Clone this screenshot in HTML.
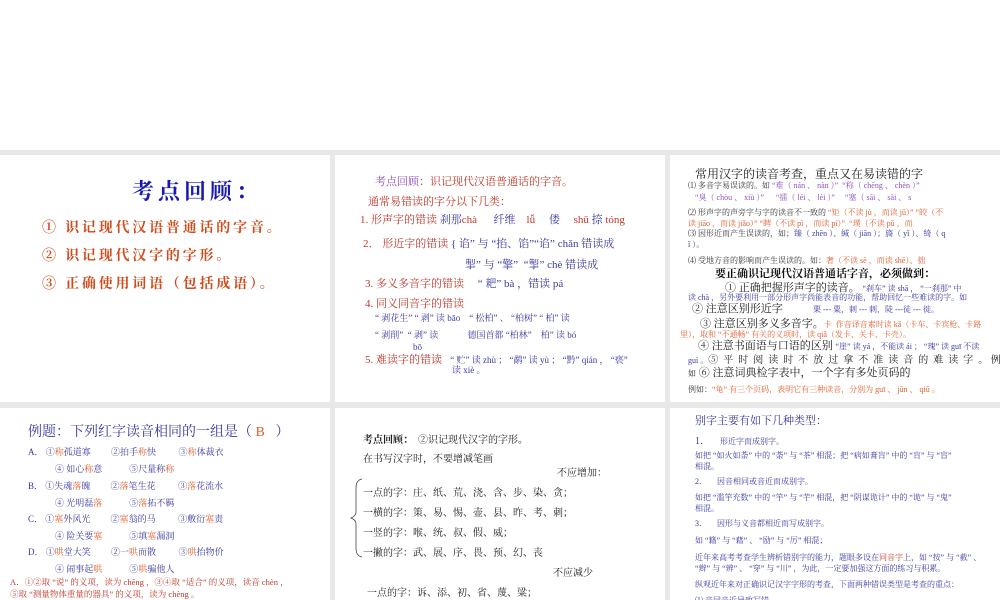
<!DOCTYPE html>
<html><head><meta charset="utf-8"><style>
*{margin:0;padding:0;box-sizing:border-box}
body{width:1000px;height:600px;overflow:hidden;background:#fff;position:relative;font-family:"Liberation Serif","Noto Serif CJK SC",serif}
.gray{position:absolute;left:0;top:150px;width:1000px;height:450px;background:#e8e8e8}
.s{position:absolute;background:#fff;overflow:hidden}
.t{position:absolute;white-space:nowrap}
.r{color:#c0392b}.b{color:#3a3aa0}.o{color:#e06030}.p{color:#9050c0}
</style></head><body>
<div class="gray"></div>

<div class="s" style="left:0;top:155px;width:330px;height:247px">
<div class="t" style="left:132px;top:20px;font-size:22px;color:#1a1ab0;font-weight:bold;letter-spacing:4px">考点回顾：</div>
<div class="t" style="left:42px;top:62px;font-size:14px;color:#d04a1a;font-weight:bold;letter-spacing:2.8px">① 识记现代汉语普通话的字音。</div>
<div class="t" style="left:42px;top:90px;font-size:14px;color:#d04a1a;font-weight:bold;letter-spacing:2.8px">② 识记现代汉字的字形。</div>
<div class="t" style="left:42px;top:118px;font-size:14px;color:#d04a1a;font-weight:bold;letter-spacing:2.8px">③ 正确使用词语（包括成语）。</div>
</div>

<div class="s" style="left:335px;top:155px;width:330px;height:247px;font-size:11px">
<div class="t p" style="left:40px;top:18px">考点回顾<span class="r">：识记现代汉语普通话的字音。</span></div>
<div class="t r" style="left:33px;top:38px">通常易错读的字分以下几类：</div>
<div class="t r" style="left:25px;top:56px">1. 形声字的错读 <span class="b">刹那</span>chà &nbsp;&nbsp;&nbsp;&nbsp;&nbsp;<span class="b">纤维</span> &nbsp;&nbsp;&nbsp;lǚ &nbsp;&nbsp;&nbsp;&nbsp;<span class="b">偻</span> &nbsp;&nbsp;&nbsp;&nbsp;shū <span class="b">捺</span> tóng</div>
<div class="t" style="left:28px;top:80px"><span class="r">2． 形近字的错读</span> <span class="b">{ 谄” 与 “掐、馅”“谄” chǎn 错读成</span></div>
<div class="t b" style="left:130px;top:101px">掣” 与 “擎” &nbsp;“掣” chè 错读成</div>
<div class="t r" style="left:30px;top:120px">3. 多义多音字的错读 &nbsp;&nbsp;&nbsp;&nbsp;<span class="b">“ 耙” bà ，错读 pá</span></div>
<div class="t r" style="left:30px;top:140px">4. 同义同音字的错读</div>
<div class="t b" style="left:40px;top:156px;font-size:9px">“ 剥花生” “ 剥” 读 bāo &nbsp;&nbsp;&nbsp;“ 松柏” 、 “柏树” “ 柏” 读</div>
<div class="t b" style="left:40px;top:173px;font-size:9px">“ 剥削” &nbsp;“ 剥” 读 &nbsp;&nbsp;&nbsp;&nbsp;&nbsp;&nbsp;&nbsp;&nbsp;&nbsp;&nbsp;&nbsp;&nbsp;德国首都 “柏林” &nbsp;&nbsp;&nbsp;柏” 读 bó</div>
<div class="t b" style="left:78px;top:187px;font-size:9px">bō</div>
<div class="t r" style="left:30px;top:196px">5. 难读字的错读 &nbsp;&nbsp;<span class="b" style="font-size:9px">“ 贮” 读 zhù ； “鹬” 读 yù ； “黔” qián ， “亵”</span></div>
<div class="t b" style="left:117px;top:208px;font-size:9px">读 xiè 。</div>
</div>

<div class="s" style="left:670px;top:155px;width:330px;height:247px;font-size:8px">
<div class="t" style="left:25px;top:10px;font-size:12px;color:#222">常用汉字的读音考查，重点又在易读错的字</div>
<div class="t" style="left:18px;top:25px;color:#333">⑴ 多音字易误读的。如 <span class="p">“难（ nán 、 nàn ）” &nbsp;“称（ chēng 、 chèn ）”</span></div>
<div class="t p" style="left:25px;top:37px">“臭（ chòu 、 xiù ）” &nbsp;&nbsp;&nbsp;&nbsp;&nbsp;“擂（ léi 、 lèi ）” &nbsp;&nbsp;&nbsp;&nbsp;“塞（ sāi 、 sài 、 s</div>
<div class="t" style="left:18px;top:52px;color:#333">⑵ 形声字的声旁字与字的读音不一致的 <span class="o">“矩（不读 jù ，而读 jǔ）” “皎（不</span></div>
<div class="t o" style="left:18px;top:63px">读 jiāo ，而读 jiǎo）” “睥（不读 pì ，而读 pí）” &nbsp;“璞（不读 pǔ ，而</div>
<div class="t" style="left:18px;top:73px;color:#333">⑶ 因形近而产生误读的，如；<span class="b">臻（ zhēn ）、缄（ jiān ）；旖（ yǐ ）、绮（ q</span></div>
<div class="t b" style="left:18px;top:84px">ǐ ）。</div>
<div class="t" style="left:18px;top:100px;color:#333">⑷ 受地方音的影响而产生误读的。如：<span class="o">奢（不读 sē ，而读 shē）、拙</span></div>
<div class="t" style="left:45px;top:110px;font-size:11px;font-weight:bold;color:#111">要正确识记现代汉语普通话字音，必须做到：</div>
<div class="t" style="left:55px;top:124px;font-size:11px;color:#222">① 正确把握形声字的读音。 <span class="b" style="font-size:8px">“刹车” 读 shā ， “一刹那” 中</span></div>
<div class="t b" style="left:18px;top:137px">读 chà ，另外要利用一部分形声字尚能表音的功能，帮助回忆一些难读的字。如</div>
<div class="t" style="left:22px;top:145px;font-size:11px;color:#222">② 注意区别形近字 &nbsp;&nbsp;&nbsp;&nbsp;&nbsp;&nbsp;&nbsp;&nbsp;&nbsp;&nbsp;<span class="b" style="font-size:8px">栗 --- 粟，刺 --- 刺，陡 ---徒 --- 徙。</span></div>
<div class="t" style="left:30px;top:160px;font-size:11px;color:#222">③ 注意区别多义多音字。<span class="o" style="font-size:8px">卡 &nbsp;作音译音素时读 kǎ（卡车、卡宾枪、卡路</span></div>
<div class="t o" style="left:10px;top:174px">里），取和 “不通畅” 有关的义项时，读 qiǎ（发卡、关卡、卡壳）。</div>
<div class="t" style="left:28px;top:182px;font-size:11px;color:#222">④ 注意书面语与口语的区别 <span class="b" style="font-size:8px">“崖” 读 yá ，不能读 ái ； “瑰” 读 guī 不读</span></div>
<div class="t" style="left:18px;top:196px;font-size:10px;color:#222"><span class="b" style="font-size:8px">guì 。</span>⑤ &nbsp;平 &nbsp;时 &nbsp;阅 &nbsp;读 &nbsp;时 &nbsp;不 &nbsp;放 &nbsp;过 &nbsp;拿 &nbsp;不 &nbsp;准 &nbsp;读 &nbsp;音 &nbsp;的 &nbsp;难 &nbsp;读 &nbsp;字 &nbsp;。 例</div>
<div class="t" style="left:18px;top:209px;font-size:11px;color:#222"><span style="font-size:8px">如</span> ⑥ 注意词典检字表中，一个字有多处页码的</div>
<div class="t" style="left:18px;top:229px;color:#333">例如：<span class="o">“龟” 有三个页码，表明它有三种读音，分别为 guī 、 jūn 、 qiū 。</span></div>
</div>

<div class="s" style="left:0;top:408px;width:330px;height:192px;font-size:9px">
<div class="t b" style="left:28px;top:13px;font-size:14px">例题：下列红字读音相同的一组是（ <span class="o">B</span> &nbsp;&nbsp;）</div>
<div class="t b" style="left:28px;top:37px">A． ①<span class="o">称</span>孤道寡 &nbsp;&nbsp;&nbsp;&nbsp;&nbsp;&nbsp;&nbsp;&nbsp;②拍手<span class="o">称</span>快 &nbsp;&nbsp;&nbsp;&nbsp;&nbsp;&nbsp;&nbsp;&nbsp;&nbsp;③<span class="o">称</span>体裁衣</div>
<div class="t b" style="left:55px;top:54px">④ 如心<span class="o">称</span>意 &nbsp;&nbsp;&nbsp;&nbsp;&nbsp;&nbsp;&nbsp;&nbsp;&nbsp;&nbsp;&nbsp;⑤尺量称<span class="o">称</span></div>
<div class="t b" style="left:28px;top:71px">B． ①失魂<span class="o">落</span>魄 &nbsp;&nbsp;&nbsp;&nbsp;&nbsp;&nbsp;&nbsp;&nbsp;②<span class="o">落</span>笔生花 &nbsp;&nbsp;&nbsp;&nbsp;&nbsp;&nbsp;&nbsp;&nbsp;&nbsp;③<span class="o">落</span>花流水</div>
<div class="t b" style="left:55px;top:88px">④ 光明磊<span class="o">落</span> &nbsp;&nbsp;&nbsp;&nbsp;&nbsp;&nbsp;&nbsp;&nbsp;&nbsp;&nbsp;&nbsp;⑤<span class="o">落</span>拓不羁</div>
<div class="t b" style="left:28px;top:104px">C． ①<span class="o">塞</span>外风光 &nbsp;&nbsp;&nbsp;&nbsp;&nbsp;&nbsp;&nbsp;&nbsp;②<span class="o">塞</span>翁的马 &nbsp;&nbsp;&nbsp;&nbsp;&nbsp;&nbsp;&nbsp;&nbsp;&nbsp;③敷衍<span class="o">塞</span>责</div>
<div class="t b" style="left:55px;top:121px">④ 险关要<span class="o">塞</span> &nbsp;&nbsp;&nbsp;&nbsp;&nbsp;&nbsp;&nbsp;&nbsp;&nbsp;&nbsp;&nbsp;⑤填<span class="o">塞</span>漏洞</div>
<div class="t b" style="left:28px;top:137px">D． ①<span class="o">哄</span>堂大笑 &nbsp;&nbsp;&nbsp;&nbsp;&nbsp;&nbsp;&nbsp;&nbsp;②一<span class="o">哄</span>而散 &nbsp;&nbsp;&nbsp;&nbsp;&nbsp;&nbsp;&nbsp;&nbsp;&nbsp;③<span class="o">哄</span>抬物价</div>
<div class="t b" style="left:55px;top:154px">④ 闹事起<span class="o">哄</span> &nbsp;&nbsp;&nbsp;&nbsp;&nbsp;&nbsp;&nbsp;&nbsp;&nbsp;&nbsp;&nbsp;⑤<span class="o">哄</span>骗他人</div>
<div class="t r" style="left:10px;top:168px;font-size:8.5px">A．①②取 “说” 的义项，读为 chēng ，③④取 “适合” 的义项，读音 chèn ，</div>
<div class="t r" style="left:10px;top:180px;font-size:8.5px">⑤取 “测量物体重量的器具” 的义项，读为 chèng 。</div>
</div>

<div class="s" style="left:335px;top:408px;width:330px;height:192px;font-size:10px;color:#222">
<div class="t" style="left:28px;top:23px"><b>考点回顾：</b> &nbsp;②识记现代汉字的字形。</div>
<div class="t" style="left:28px;top:42px">在书写汉字时，不要增减笔画</div>
<div class="t" style="left:222px;top:56px">不应增加：</div>
<div class="t" style="left:28px;top:76px">一点的字：庄、纸、荒、浇、含、步、染、贪；</div>
<div class="t" style="left:28px;top:96px">一横的字：策、易、惕、壶、县、昨、考、刺；</div>
<div class="t" style="left:28px;top:116px">一竖的字：喉、统、叔、假、威；</div>
<div class="t" style="left:28px;top:136px">一撇的字：武、展、序、畏、预、幻、丧</div>
<div class="t" style="left:218px;top:156px">不应减少</div>
<div class="t" style="left:32px;top:176px">一点的字：诉、添、初、省、蔑、粱；</div>
<svg style="position:absolute;left:15px;top:70px" width="15" height="80"><path d="M12 1 Q6 2 6 10 L6 34 Q6 38 1 40 Q6 42 6 46 L6 70 Q6 78 12 79" fill="none" stroke="#444" stroke-width="0.8"/></svg>
</div>

<div class="s" style="left:670px;top:408px;width:330px;height:192px;font-size:8px;color:#3a3aa0">
<div class="t" style="left:25px;top:4px;font-size:11px">别字主要有如下几种类型：</div>
<div class="t" style="left:25px;top:24px"><span style="font-size:10px">1．</span> &nbsp;&nbsp;&nbsp;&nbsp;形近字而成别字。</div>
<div class="t" style="left:25px;top:42px">如把 “如火如荼” 中的 “荼” 与 “茶” 相混；把 “病如膏肓” 中的 “肓” 与 “盲”</div>
<div class="t" style="left:25px;top:53px">相混。</div>
<div class="t" style="left:25px;top:68px">2． &nbsp;&nbsp;&nbsp;&nbsp;因音相同或音近而成别字。</div>
<div class="t" style="left:25px;top:84px">如把 “滥竽充数” 中的 “竽” 与 “芋” 相混，把 “阴谋诡计” 中的 “诡” 与 “鬼”</div>
<div class="t" style="left:25px;top:95px">相混。</div>
<div class="t" style="left:25px;top:110px">3． &nbsp;&nbsp;&nbsp;&nbsp;因形与义音都相近而写成别字。</div>
<div class="t" style="left:25px;top:127px">如 “籍” 与 “藉” 、 “励” 与 “厉” 相混；</div>
<div class="t" style="left:25px;top:144px">近年来高考考查学生辨析错别字的能力，题眼多设在<span class="r">同音字</span>上，如 “按” 与 “截” 、</div>
<div class="t" style="left:25px;top:155px">“辫” 与 “辨” 、 “穿” 与 “川” ，为此，一定要加强这方面的练习与积累。</div>
<div class="t" style="left:25px;top:171px">纵观近年来对正确识记汉字字形的考查，下面两种错误类型是考查的重点：</div>
<div class="t" style="left:25px;top:187px">⑴ 音同音近导致写错。</div>
</div>
</body></html>
